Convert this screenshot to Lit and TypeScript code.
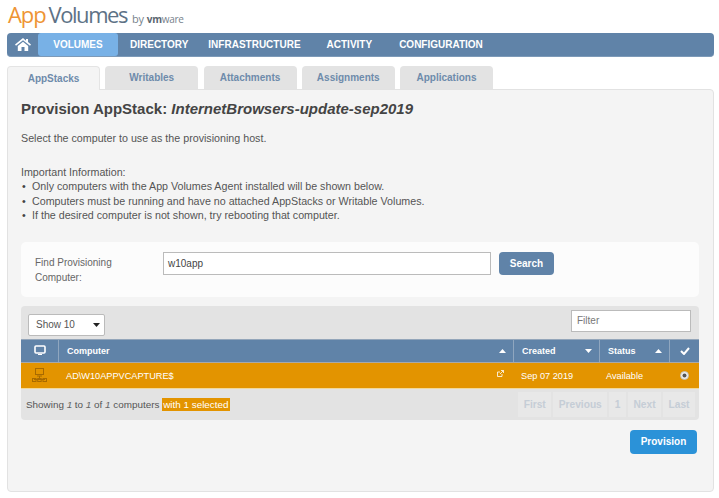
import { LitElement, html, css, svg } from "lit";
import { customElement } from "lit/decorators.js";

const caretUp = svg`<svg class="caret" width="7" height="4" viewBox="0 0 7 4"><path d="M3.5 0L7 4H0z" fill="#fff"/></svg>`;
const caretDown = svg`<svg class="caret" width="7" height="4" viewBox="0 0 7 4"><path d="M0 0h7L3.5 4z" fill="#fff"/></svg>`;

@customElement("app-root")
export class AppRoot extends LitElement {
  static styles = css`
    :host { display: block; width: 719px; height: 498px; box-sizing: border-box; padding: 0 5px 0 7px; background: #fff; font-family: "Liberation Sans", Arial, sans-serif; font-size: 10.7px; color: #555; overflow: hidden; }
    * { box-sizing: border-box; }
    .logo { height: 33px; display: flex; align-items: baseline; padding: 2px 0 0 1px; font-family: "Open Sans", sans-serif; line-height: 24px; white-space: nowrap; }
    .app { color: #ee9434; font-size: 22px; letter-spacing: -1.1px; margin-right: 3px; font-weight: 500; }
    .vol { color: #5d7286; font-size: 22px; letter-spacing: -1.45px; font-weight: 500; }
    .by { color: #77828c; font-size: 11px; margin-left: 5px; letter-spacing: -.2px; }
    .vm { color: #5b6670; font-size: 10px; margin-left: 3px; letter-spacing: -.3px; font-weight: 700; }
    .vm span { font-weight: 400; color: #77828c; }
    nav { height: 24px; background: #6083a8; border-radius: 4px; display: flex; align-items: stretch; color: #fff; font-size: 10px; font-weight: bold; border: 1px solid #7d9ab8; border-width: 0 0 1px 0; }
    .home { width: 31px; display: flex; align-items: center; justify-content: center; }
    .nav-item { display: flex; align-items: center; white-space: nowrap; }
    .nav-item.on { width: 80px; justify-content: center; background: #78b1e6; border-radius: 3px; }
    .directory { margin-left: 12px; }
    .infra { margin-left: 20px; }
    .activity { margin-left: 26px; }
    .config { margin-left: 27px; }
    .tabs { display: flex; gap: 5.25px; margin-top: 9px; height: 23px; position: relative; z-index: 1; }
    .tab { width: 93px; height: 23px; border-radius: 4px 4px 0 0; background: #e3e3e3; color: #6e8bab; font-size: 10px; font-weight: bold; display: flex; align-items: center; justify-content: center; padding-bottom: 1px; }
    .tab.on { height: 24px; background: #f4f4f4; border: 1px solid #e4e4e4; border-bottom: none; }
    .panel { height: 403px; background: #f4f4f4; border: 1px solid #e2e2e2; border-radius: 0 4px 4px 4px; padding: 0 14px 0 13px; display: flex; flex-direction: column; }
    h1 { margin: 10px 0 0; font-size: 15px; line-height: 18px; font-weight: bold; color: #444; white-space: nowrap; }
    h1 em { font-style: italic; }
    .text { line-height: 14px; font-size: 10.7px; color: #555; }
    .select-line { margin-top: 13px; }
    .info { margin-top: 20px; }
    .info div { height: 14.4px; line-height: 14.4px; white-space: nowrap; }
    .info .li::before { content: "•"; display: inline-block; width: 10px; padding-left: 1px; color: #444; }
    .search { margin-top: 19px; height: 55px; background: #fcfcfc; border-radius: 5px; display: flex; align-items: flex-start; padding: 10px 0 0 14px; }
    .find { width: 128px; font-size: 10px; line-height: 15px; color: #666; padding: 3px 34px 0 0; }
    .input { width: 328px; height: 23px; background: #fff; border: 1px solid #bbb; padding-left: 4px; line-height: 21px; font-size: 10px; color: #444; }
    .btn-search { margin-left: 8px; width: 55px; height: 23px; background: #6083a8; border-radius: 4px; color: #fff; font-weight: bold; font-size: 10px; display: flex; align-items: center; justify-content: center; }
    .tbl { margin-top: 9px; height: 114px; background: #e3e3e3; border-radius: 4px; display: flex; flex-direction: column; }
    .toolbar { height: 33px; display: flex; align-items: flex-start; justify-content: space-between; padding: 4px 8px 0 7px; flex: none; }
    .show { width: 77px; height: 22px; margin-top: 4px; background: #fff; border: 1px solid #bbb; border-radius: 2px; display: flex; align-items: center; justify-content: space-between; padding: 0 4px 0 7px; font-size: 10px; color: #555; }
    .filter { width: 120px; height: 22px; background: #fff; border: 1px solid #bbb; padding-left: 5px; line-height: 20px; font-size: 10px; color: #777; }
    .thead, .row { display: grid; grid-template-columns: 37px 455px 86px 70px 30px; flex: none; }
    .thead { height: 24px; background: #6083a8; color: #fff; font-weight: bold; font-size: 9px; border-bottom: 1px solid #a9a9a9; border-top: 1px solid #94a6ba; }
    .th { display: flex; align-items: center; justify-content: space-between; padding: 0 7px 0 8px; border-left: 1px solid #8fa6bf; }
    .th:first-child { border-left: none; justify-content: center; padding: 0; }
    .th.center { justify-content: center; padding: 0; }
    .row { height: 26px; background: #e39400; color: #fff; font-size: 9.2px; border-bottom: 1px solid #f1d89a; padding-top: 1px; }
    .td { display: flex; align-items: center; padding: 0 8px; white-space: nowrap; }
    .td.center { justify-content: center; padding: 0; }
    .td.comp { justify-content: space-between; padding-right: 9px; }
    .td.date { padding-left: 8px; }
    .td.avail { padding-left: 7px; }
    .foot { flex: 1; display: flex; justify-content: space-between; padding: 0 4px 0 5px; align-items: center; font-size: 9.9px; color: #555; }
    .foot i { color: #666; }
    .sel { background: #e39400; color: #fff; padding: 1px; }
    .pager { display: flex; gap: 2px; color: #c5cdd6; font-weight: bold; font-size: 10.2px; }
    .pager span { height: 25px; background: #e8e8e8; display: flex; align-items: center; padding: 0 5.5px; }
    .actions { display: flex; justify-content: flex-end; padding: 10px 2px 0 0; }
    .provision { width: 67px; height: 24px; background: #2b92d8; color: #fff; border-radius: 4px; font-weight: bold; font-size: 10px; display: flex; align-items: center; justify-content: center; }
    .caret { flex: none; }
  `;

  render() {
    return html`
      <div class="logo"><span class="app">App</span><span class="vol">Volumes</span><span class="by">by</span><span class="vm">vm<span>ware</span></span></div>
      <nav>
        <div class="home"><svg width="16" height="13" viewBox="0 0 16 13"><path d="M8 0L0 6.6l1 1.2L8 2.2l7 5.6 1-1.2-3-2.5V1h-2v1.8z" fill="#fff"/><path d="M2.8 8L8 3.7 13.2 8v5H9.5V9h-3v4H2.8z" fill="#fff"/></svg></div>
        <div class="nav-item on">VOLUMES</div>
        <div class="nav-item directory">DIRECTORY</div>
        <div class="nav-item infra">INFRASTRUCTURE</div>
        <div class="nav-item activity">ACTIVITY</div>
        <div class="nav-item config">CONFIGURATION</div>
      </nav>
      <div class="tabs">
        <div class="tab on">AppStacks</div><div class="tab">Writables</div><div class="tab">Attachments</div><div class="tab">Assignments</div><div class="tab">Applications</div>
      </div>
      <div class="panel">
        <h1>Provision AppStack: <em>InternetBrowsers-update-sep2019</em></h1>
        <div class="text select-line">Select the computer to use as the provisioning host.</div>
        <div class="text info">
          <div>Important Information:</div>
          <div class="li">Only computers with the App Volumes Agent installed will be shown below.</div>
          <div class="li">Computers must be running and have no attached AppStacks or Writable Volumes.</div>
          <div class="li">If the desired computer is not shown, try rebooting that computer.</div>
        </div>
        <div class="search">
          <div class="find">Find Provisioning Computer:</div>
          <div class="input">w10app</div>
          <div class="btn-search">Search</div>
        </div>
        <div class="tbl">
          <div class="toolbar">
            <div class="show"><span>Show 10</span><svg width="7" height="4" viewBox="0 0 7 4"><path d="M0 0h7L3.5 4z" fill="#222"/></svg></div>
            <div class="filter">Filter</div>
          </div>
          <div class="thead">
            <div class="th"><svg width="12" height="11" viewBox="0 0 12 11"><rect x="1" y="1" width="10" height="7" rx="1" fill="none" stroke="#fff" stroke-width="1.6"/><path d="M4 10h4V9H4z" fill="#fff"/></svg></div>
            <div class="th"><span>Computer</span>${caretUp}</div>
            <div class="th"><span>Created</span>${caretDown}</div>
            <div class="th"><span>Status</span>${caretUp}</div>
            <div class="th center"><svg width="10" height="8" viewBox="0 0 10 8"><path d="M1 4l3 3 5-6" fill="none" stroke="#fff" stroke-width="2"/></svg></div>
          </div>
          <div class="row">
            <div class="td center"><svg width="15" height="15" viewBox="0 0 15 15" fill="none" stroke="#a86a00"><rect x="3.5" y=".5" width="8" height="6"/><path d="M5 8h5M7.5 8v3M2 11.5h11"/><rect x=".5" y="10.5" width="3.5" height="3"/><rect x="5.7" y="10.5" width="3.5" height="3"/><rect x="11" y="10.5" width="3.5" height="3"/></svg></div>
            <div class="td comp"><span>AD\\W10APPVCAPTURE$</span><svg width="7" height="7" viewBox="0 0 7 7" fill="none" stroke="#fff" stroke-width=".8" style="margin-top:-4px"><path d="M5 4v2.5H.5V2H3M3 4l3.5-3.5M4 .5h2.5V3"/></svg></div>
            <div class="td date">Sep 07 2019</div>
            <div class="td avail">Available</div>
            <div class="td center"><svg width="9" height="9" viewBox="0 0 9 9"><circle cx="4.5" cy="4.5" r="4" fill="#eee" stroke="#bbb" stroke-width=".8"/><circle cx="4.5" cy="4.5" r="2" fill="#555"/></svg></div>
          </div>
          <div class="foot">
            <div>Showing <i>1</i> to <i>1</i> of <i>1</i> computers <span class="sel">with 1 selected</span></div>
            <div class="pager"><span>First</span><span>Previous</span><span>1</span><span>Next</span><span>Last</span></div>
          </div>
        </div>
        <div class="actions"><div class="provision">Provision</div></div>
      </div>
    `;
  }
}
